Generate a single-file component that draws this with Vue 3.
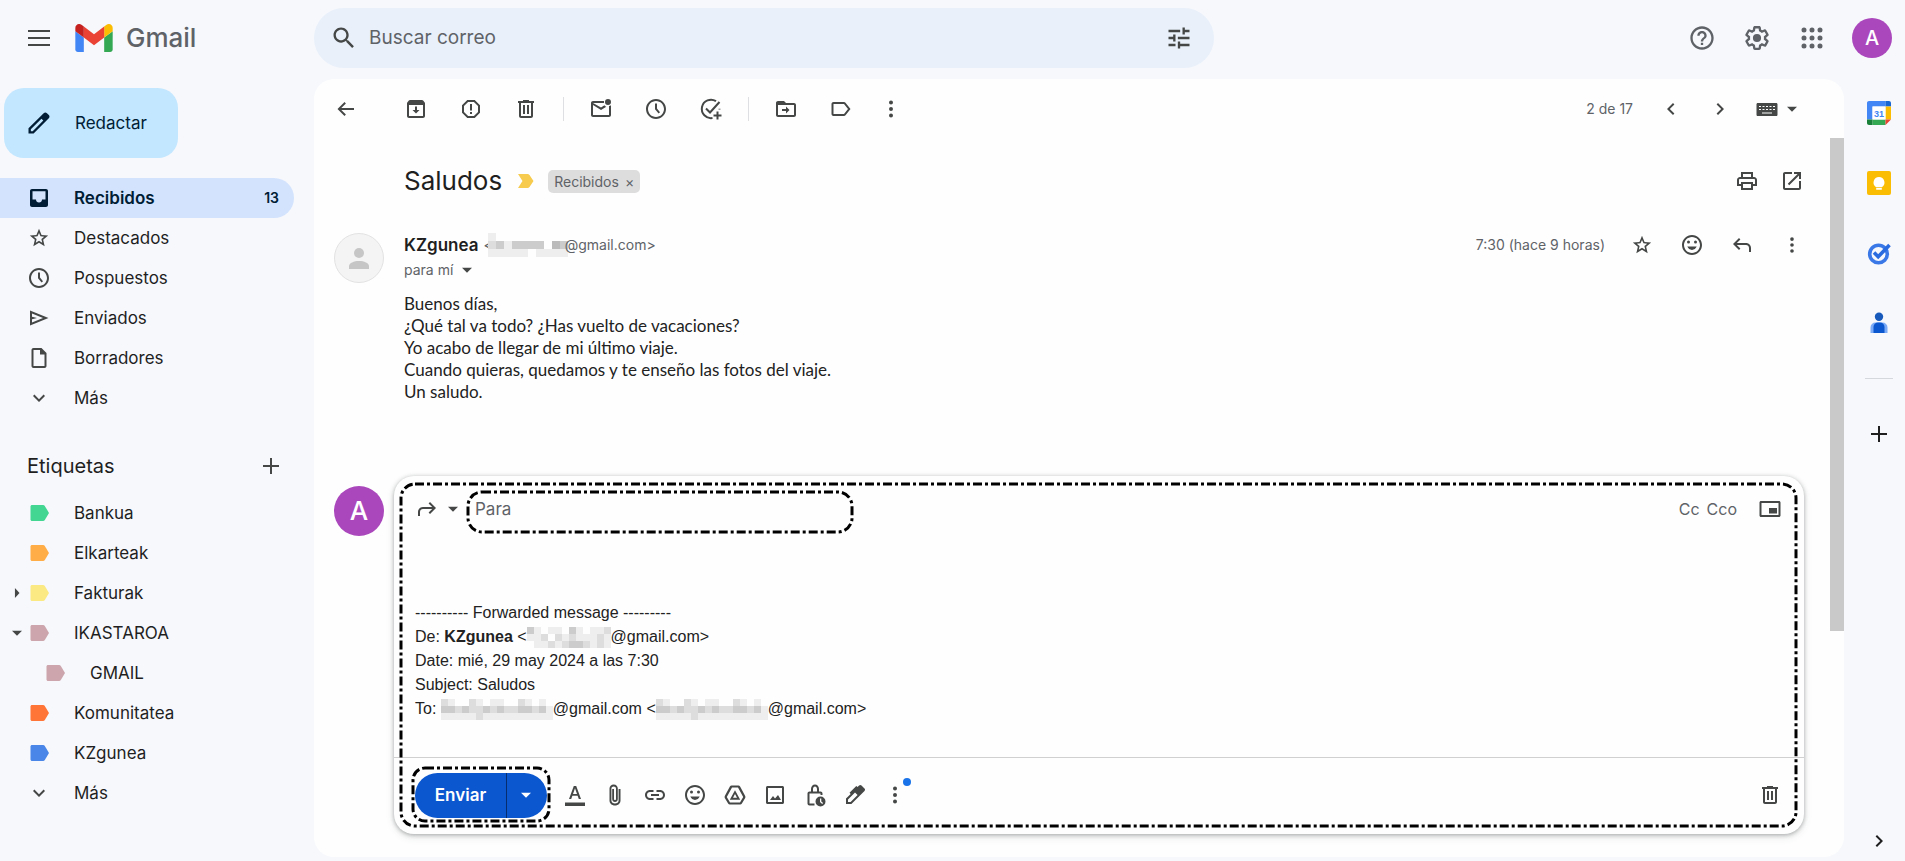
<script setup>
import { h, ref } from 'vue'

const paths = {
  menu: 'M1 4h22v2H1zM1 11h22v2H1zM1 18h22v2H1z',
  search: 'M15.5 14h-.79l-.28-.27C15.41 12.59 16 11.11 16 9.5 16 5.91 13.09 3 9.5 3S3 5.91 3 9.5 5.91 16 9.5 16c1.61 0 3.09-.59 4.23-1.57l.27.28v.79l5 4.99L20.49 19l-4.99-5zm-6 0C7.01 14 5 11.99 5 9.5S7.01 5 9.5 5 14 7.01 14 9.5 11.99 14 9.5 14z',
  tune: 'M3 17v2h6v-2H3zM3 5v2h10V5H3zm10 16v-2h8v-2h-8v-2h-2v6h2zM7 9v2H3v2h4v2h2V9H7zm14 4v-2H11v2h10zm-6-4h2V7h4V5h-4V3h-2v6z',
  help: 'M11 18h2v-2h-2v2zm1-16C6.48 2 2 6.48 2 12s4.48 10 10 10 10-4.48 10-10S17.52 2 12 2zm0 18c-4.41 0-8-3.59-8-8s3.59-8 8-8 8 3.59 8 8-3.59 8-8 8zm0-14c-2.21 0-4 1.79-4 4h2c0-1.1.9-2 2-2s2 .9 2 2c0 2-3 1.75-3 5h2c0-2.25 3-2.5 3-5 0-2.21-1.79-4-4-4z',
  settings: 'M13.85 22.25h-3.7c-.74 0-1.36-.54-1.45-1.27l-.27-1.89c-.27-.14-.53-.29-.79-.46l-1.8.72c-.7.26-1.47-.03-1.81-.65L2.2 15.53c-.35-.66-.2-1.44.36-1.88l1.53-1.19c-.01-.15-.02-.3-.02-.46 0-.15.01-.31.02-.46l-1.52-1.19c-.59-.45-.74-1.26-.37-1.88l1.85-3.19c.34-.62 1.11-.9 1.79-.63l1.81.73c.26-.17.52-.32.78-.46l.27-1.91c.09-.7.71-1.25 1.44-1.25h3.7c.74 0 1.36.54 1.45 1.27l.27 1.89c.27.14.53.29.79.46l1.8-.72c.71-.26 1.48.03 1.82.65l1.84 3.18c.36.66.2 1.44-.36 1.88l-1.52 1.19c.01.15.02.3.02.46s-.01.31-.02.46l1.52 1.19c.56.45.72 1.23.37 1.86l-1.86 3.22c-.34.62-1.11.9-1.8.63l-1.8-.72c-.26.17-.52.32-.78.46l-.27 1.91c-.1.68-.72 1.22-1.46 1.22zm-3.23-2h2.76l.37-2.55.53-.22c.44-.18.88-.44 1.34-.78l.45-.34 2.38.96 1.38-2.4-2.03-1.58.07-.56c.03-.26.06-.51.06-.78s-.03-.53-.06-.78l-.07-.56 2.03-1.58-1.39-2.4-2.39.96-.45-.35c-.42-.32-.87-.58-1.33-.77l-.52-.22-.37-2.55h-2.76l-.37 2.55-.53.21c-.44.19-.88.44-1.34.79l-.45.33-2.38-.95-1.39 2.39 2.03 1.58-.07.56a7 7 0 0 0-.06.79c0 .26.02.53.06.78l.07.56-2.03 1.58 1.38 2.4 2.39-.96.45.35c.43.33.86.58 1.33.77l.53.22.38 2.55zM12 8.5a3.5 3.5 0 1 1 0 7 3.5 3.5 0 0 1 0-7z',
  apps: [4, 12, 20].flatMap(y => [4, 12, 20].map(x => `M${x - 2.5} ${y}a2.5 2.5 0 1 1 5 0a2.5 2.5 0 1 1-5 0z`)).join(''),
  pencil: 'M20.4 5.2 18.8 3.6c-.8-.8-2-.8-2.8 0L3 16.6V21h4.4l13-13c.8-.8.8-2 0-2.8zM6.600 19H5v-1.600l9.100-9.100 1.600 1.600z',
  inbox: 'M19 3H5c-1.1 0-2 .9-2 2v14c0 1.1.9 2 2 2h14c1.1 0 2-.9 2-2V5c0-1.1-.9-2-2-2zM5.5 5.200h13V13.500h-3.5c0 1.700-1.300 3-3 3s-3-1.300-3-3H5.500z',
  star: 'M22 9.24l-7.19-.62L12 2 9.190 8.630 2 9.240l5.460 4.730L5.820 21 12 17.270 18.180 21l-1.630-7.030L22 9.240zM12 15.100l-3.500 2.100 .9-4-3.100-2.600 4.100-.4L12 6.500l1.600 3.700 4.100.4-3.100 2.600.9 4L12 15.100z',
  clock: 'M12 2C6.480 2 2 6.480 2 12s4.480 10 10 10 10-4.480 10-10S17.520 2 12 2zm0 18c-4.400 0-8-3.600-8-8s3.600-8 8-8 8 3.600 8 8-3.600 8-8 8zM11 6.500h2v5l3 3.700-1.400 1.300L11 12.300z',
  send: 'M3 4.500v15L21.500 12 3 4.500zm2 3L16 12 5 16.500v-3.200l5-1.300-5-1.300z',
  draft: 'M14.500 2H6.500C5.400 2 4.500 2.900 4.500 4v16c0 1.100.9 2 2 2h11c1.100 0 2-.9 2-2V7l-5-5zM6.500 20V4H13v4.500h4.500V20z',
  expand: 'M7.400 8.600 12 13.200l4.600-4.600L18 10l-6 6-6-6z',
  plus: 'M20 13h-7v7h-2v-7H4v-2h7V4h2v7h7z',
  back: 'M20 11H7.300l4.600-4.600L10.500 5l-7 7 7 7 1.400-1.400L7.300 13H20z',
  archive: 'M20.540 5.230l-1.390-1.680C18.880 3.210 18.470 3 18 3H6c-.47 0-.88.21-1.160.55L3.460 5.230C3.170 5.570 3 6.020 3 6.500V19c0 1.100.9 2 2 2h14c1.100 0 2-.9 2-2V6.500c0-.48-.17-.93-.46-1.270zM5 19V8h14v11H5zM11 9.500h2V13h2.500L12 16.500 8.500 13H11z',
  report: 'M15.730 3H8.270L3 8.270v7.460L8.270 21h7.460L21 15.730V8.270L15.730 3zM19 14.900L14.900 19H9.100L5 14.900V9.100L9.100 5h5.800L19 9.100v5.800zM11 7h2v6.500h-2zM11 15h2v2h-2z',
  trash: 'M15 4V3H9v1H4v2h1v13c0 1.100.9 2 2 2h10c1.100 0 2-.9 2-2V6h1V4zM17 19H7V6h10zM9 8h2v9H9zM13 8h2v9h-2z',
  unread: 'M20 8.900V18H4V8l8 5 5.300-3.300C16.500 9.400 15.900 8.900 15.500 8.200L12 10.500 4 6h11V4H4c-1.100 0-2 .9-2 2v12c0 1.100.9 2 2 2h16c1.100 0 2-.9 2-2V8.200c-.6.400-1.200.6-2 .7zM19 2a3 3 0 1 1 0 6 3 3 0 0 1 0-6z',
  move: 'M20 6h-8l-2-2H4c-1.100 0-2 .9-2 2v12c0 1.100.9 2 2 2h16c1.100 0 2-.9 2-2V8c0-1.100-.9-2-2-2zm0 12H4V8h16zM12 9.500 15.500 13 12 16.500V14H8v-2h4z',
  label: 'M16.500 5.800C16.100 5.300 15.600 5 15 5H4.500C3.400 5 2.500 5.900 2.500 7v10c0 1.100.9 2 2 2H15c.6 0 1.100-.3 1.500-.8L21.500 12zM15 17H4.500V7H15l4 5z',
  more: 'M12 3.500a2 2 0 1 1 0 4 2 2 0 0 1 0-4zM12 10a2 2 0 1 1 0 4 2 2 0 0 1 0-4zM12 16.500a2 2 0 1 1 0 4 2 2 0 0 1 0-4z',
  prev: 'M15.400 7.400 14 6l-6 6 6 6 1.400-1.400L10.800 12z',
  next: 'M8.600 16.600 13.200 12 8.600 7.400 10 6l6 6-6 6z',
  caret: 'M6 9.200h12L12 15.400z',
  right: 'M9.500 6v12l5.500-6z',
  keyboard: 'M21 6H3c-1.100 0-1.500.5-1.500 1.500v10c0 1 .4 1.500 1.500 1.500h18c1.100 0 1.500-.5 1.500-1.500v-10c0-1-.4-1.500-1.500-1.500zM4 9h2v1H4zM7.500 9h2v1h-2zM11 9h2v1h-2zM14.500 9h2v1h-2zM18 9h2v1h-2zM4 12h2v1H4zM7.500 12h2v1h-2zM11 12h2v1h-2zM14.500 12h2v1h-2zM18 12h2v1h-2zM7 15.500h10v1H7z',
  print: 'M19 8h-1V3H6v5H5c-1.660 0-3 1.340-3 3v6h4v4h12v-4h4v-6c0-1.660-1.340-3-3-3zM8 5h8v3H8V5zm8 14H8v-4h8v4zm4-4h-2v-2H6v2H4v-4c0-.55.45-1 1-1h14c.55 0 1 .45 1 1z',
  open: 'M19 19H5V5h7V3H5c-1.100 0-2 .9-2 2v14c0 1.100.9 2 2 2h14c1.100 0 2-.9 2-2v-7h-2zM14 3v2h3.600L7.800 14.800l1.400 1.400L19 6.400V10h2V3z',
  emoji: 'M12 2C6.500 2 2 6.500 2 12s4.500 10 10 10 10-4.500 10-10S17.500 2 12 2zm0 18c-4.400 0-8-3.600-8-8s3.600-8 8-8 8 3.600 8 8-3.600 8-8 8zM8.500 7.500a1.500 1.500 0 1 1 0 3 1.500 1.500 0 0 1 0-3zM15.500 7.500a1.500 1.500 0 1 1 0 3 1.500 1.500 0 0 1 0-3zM7.300 13.600h9.400c-.8 2-2.600 3.300-4.700 3.300s-3.900-1.300-4.700-3.300z',
  reply: 'M9 5 3 11l6 6 1.400-1.400L6.800 12H16c1.700 0 3 1.300 3 3v4h2v-4c0-2.800-2.200-5-5-5H6.800l3.600-3.600z',
  forward: 'M15 5l6 6-6 6-1.400-1.400 3.600-3.600H8c-1.700 0-3 1.300-3 3v4H3v-4c0-2.800 2.200-5 5-5h9.200l-3.600-3.600z',
  popout: 'M21 4H3c-.8 0-1.500.7-1.500 1.500v13c0 .8.700 1.500 1.500 1.500h18c.8 0 1.500-.7 1.500-1.500v-13c0-.8-.7-1.500-1.500-1.500zM20.500 18h-17V6h17zM11 11h8v5.500h-8z',
  format: 'M2 19.500h20V23H2zM10.800 3h2.400L18 16h-2.200l-1.200-3.300H9.400L8.200 16H6zM10 10.900h4L12 5.200z',
  attach: 'M17.500 6v11.500c0 2.800-2.200 5-5.500 5s-5.500-2.200-5.500-5V5.500C6.500 3.300 8.200 1.500 10.700 1.500s4.100 1.800 4.100 4V16c0 1.700-1.200 3-2.800 3s-2.800-1.300-2.800-3V6H11v10c0 .6.400 1 1 1s1-.4 1-1V5.500c0-1.100-1-2-2.300-2s-2.300.9-2.300 2v12c0 1.700 1.600 3 3.600 3s3.600-1.300 3.600-3V6z',
  link: 'M10.500 7H7c-2.800 0-5 2.200-5 5s2.200 5 5 5h3.500v-2H7c-1.700 0-3-1.300-3-3s1.300-3 3-3h3.500zM13.500 7v2H17c1.700 0 3 1.300 3 3s-1.300 3-3 3h-3.500v2H17c2.800 0 5-2.200 5-5s-2.200-5-5-5zM8 11h8v2H8z',
  drive: 'M15.400 2.500H8.600c-.7 0-1.300.4-1.700 1L1.800 13c-.3.600-.3 1.300 0 1.900l3.300 5.600c.4.600 1 1 1.700 1h10.400c.7 0 1.300-.4 1.700-1l3.300-5.600c.3-.6.3-1.300 0-1.900L17.100 3.500c-.4-.6-1-1-1.700-1zM17 19.500H7L3.800 14 9 4.500h6l5.200 9.500zM12 7.200l-5.200 9.600h10.400zm0 3.900 2 3.700h-4z',
  image: 'M19.500 3h-15C3.700 3 3 3.700 3 4.500v15c0 .8.700 1.500 1.500 1.500h15c.8 0 1.500-.7 1.500-1.500v-15c0-.8-.7-1.500-1.500-1.500zM19 19H5V5h14zM7 17l3-4 2 2.500 3-3.500 3 5z',
  lock: 'M17.500 8.500H16V6c0-2.500-1.800-4.500-4-4.500S8 3.500 8 6v2.500H6.500c-1.100 0-2 .9-2 2v10c0 1.100.9 2 2 2h5v-2h-5v-10h11V12h2v-1.500c0-1.100-.9-2-2-2zM10 8.500V6c0-1.400.9-2.500 2-2.500s2 1.100 2 2.500v2.500zM17.500 13.500a5 5 0 1 1 0 10 5 5 0 0 1 0-10zM17 15.500v3.400l2.200 2 .9-.9-1.800-1.600v-2.900z',
  pen: 'M21.500 5.500 18.500 2.500c-.7-.7-1.700-.7-2.400 0L14.500 4l-1.200-1.100L6.500 9.700l1.200 1.200L3 15.600V21h5.400L21.500 7.900c.7-.7.7-1.700 0-2.400zM7.600 19H5v-2.600l7-7 2.600 2.600z',
}
const Icon = (props) => h('svg', { class: 'icon', viewBox: '0 0 24 24', 'aria-hidden': 'true' }, [
  h('path', { d: paths[props.name], 'fill-rule': 'evenodd' }),
])
Icon.props = ['name']

const folders = [
  { name: 'Recibidos', icon: 'inbox', count: 13, active: true },
  { name: 'Destacados', icon: 'star' },
  { name: 'Pospuestos', icon: 'clock' },
  { name: 'Enviados', icon: 'send' },
  { name: 'Borradores', icon: 'draft' },
  { name: 'Más', icon: 'expand' },
]
const labels = [
  { name: 'Bankua', color: '#42d692' },
  { name: 'Elkarteak', color: '#ffad47' },
  { name: 'Fakturak', color: '#fbe983', arrow: 'right' },
  { name: 'IKASTAROA', color: '#cca6ac', arrow: 'caret' },
  { name: 'GMAIL', color: '#cca6ac', nested: true },
  { name: 'Komunitatea', color: '#ff7537' },
  { name: 'KZgunea', color: '#4986e7' },
]
const toolbar = [
  [['archive', 'Archivar'], ['report', 'Marcar como spam'], ['trash', 'Eliminar']],
  [['unread', 'Marcar como no leído'], ['clock', 'Posponer'], ['task', 'Añadir a Tasks']],
  [['move', 'Mover a'], ['label', 'Etiquetas'], ['more', 'Más']],
]
const composeTools = [
  ['format', 'Opciones de formato'], ['attach', 'Adjuntar archivos'], ['link', 'Insertar enlace'],
  ['emoji', 'Insertar emoji'], ['drive', 'Insertar desde Drive'], ['image', 'Insertar foto'],
  ['lock', 'Modo confidencial'], ['pen', 'Insertar firma'], ['more', 'Más opciones'],
]
const body = [
  'Buenos días,',
  '¿Qué tal va todo? ¿Has vuelto de vacaciones?',
  'Yo acabo de llegar de mi último viaje.',
  'Cuando quieras, quedamos y te enseño las fotos del viaje.',
  'Un saludo.',
]

// Redacted addresses: rows of grey levels, one hex digit per cell (f = blank).
const sender = ['efffffffff', 'dceccccfbc', 'eeeeefeeee']
const fromMask = ['cefeefcefeed', 'eedfdedeeede', 'feededccdede']
const toMask = ['deffdefeeffdefef', 'ccdcddcdcddccdce', 'eeeeedeeeeeeeeee']
const Mosaic = (props) => h('svg', {
  class: 'mosaic',
  width: props.rows[0].length * props.cell,
  height: props.rows.length * props.cell,
  'aria-label': 'dirección oculta',
  role: 'img',
}, props.rows.flatMap((row, y) => [...row].map((c, x) => c === 'f' ? null : h('rect', {
  x: x * props.cell, y: y * props.cell, width: props.cell, height: props.cell, fill: `#${c}${c}${c}`,
}))))
Mosaic.props = ['rows', 'cell']

const query = ref('')
const to = ref('')
</script>

<template>
  <div class="app">
    <header class="top">
      <div class="brand">
        <button class="btn" aria-label="Menú principal"><Icon name="menu" /></button>
        <a href="#" class="logo" aria-label="Gmail">
          <svg width="38" height="28" viewBox="52 42 88 66" aria-hidden="true">
            <path fill="#4285f4" d="M58 108h14V74L52 59v43c0 3.320 2.690 6 6 6" />
            <path fill="#34a853" d="M120 108h14c3.320 0 6-2.690 6-6V59l-20 15" />
            <path fill="#fbbc04" d="M120 48v26l20-15v-8c0-7.420-8.470-11.650-14.400-7.200" />
            <path fill="#ea4335" d="M72 74V48l24 18 24-18v26L96 92" />
            <path fill="#c5221f" d="M52 51v8l20 15V48l-5.600-4.200c-5.940-4.450-14.400-.22-14.400 7.200" />
          </svg>
          <span>Gmail</span>
        </a>
      </div>
      <div class="top-main">
        <form class="search" @submit.prevent>
          <button class="btn" aria-label="Buscar"><Icon name="search" /></button>
          <input v-model="query" type="text" placeholder="Buscar correo" aria-label="Buscar correo">
          <button class="btn" type="button" aria-label="Opciones de búsqueda"><Icon name="tune" /></button>
        </form>
        <div class="account">
          <button class="btn" aria-label="Ayuda"><Icon name="help" /></button>
          <button class="btn" aria-label="Configuración"><Icon name="settings" /></button>
          <button class="btn apps" aria-label="Aplicaciones"><Icon name="apps" /></button>
          <button class="avatar small" aria-label="Cuenta">A</button>
        </div>
      </div>
    </header>

    <div class="columns">
      <aside class="side">
        <button class="compose-btn"><Icon name="pencil" />Redactar</button>
        <nav class="nav" aria-label="Carpetas">
          <a v-for="f in folders" :key="f.name" href="#" class="row" :class="{ active: f.active }">
            <Icon :name="f.icon" :class="'i-' + f.icon" /><span class="name">{{ f.name }}</span><span v-if="f.count" class="count">{{ f.count }}</span>
          </a>
        </nav>
        <div class="labels-head">
          <h2>Etiquetas</h2>
          <button class="btn" aria-label="Crear etiqueta"><Icon name="plus" /></button>
        </div>
        <nav class="nav" aria-label="Etiquetas">
          <a v-for="l in labels" :key="l.name" href="#" class="row label-row" :class="{ nested: l.nested }">
            <Icon v-if="l.arrow" :name="l.arrow" class="tree" />
            <svg class="tag" width="20" height="16" viewBox="0 0 20 16" aria-hidden="true">
              <path :fill="l.color" d="M2 0h11c.8 0 1.400.3 1.800.9L19 8l-4.200 7.100c-.4.600-1 .9-1.800.9H2c-.8 0-1.500-.7-1.500-1.500v-13C.5.700 1.200 0 2 0z" />
            </svg>
            <span class="name">{{ l.name }}</span>
          </a>
          <a href="#" class="row"><Icon name="expand" /><span class="name">Más</span></a>
        </nav>
      </aside>

      <main class="panel">
        <div class="toolbar">
          <button class="btn back" aria-label="Volver"><Icon name="back" /></button>
          <template v-for="(group, i) in toolbar" :key="i">
            <span v-if="i" class="sep"></span>
            <button v-for="[icon, title] in group" :key="icon" class="btn" :class="'b-' + icon" :aria-label="title">
              <svg v-if="icon === 'task'" class="icon" viewBox="0 0 24 24" aria-hidden="true">
                <path class="line" d="M20.500 12.500v-.8M17 4.200A9.200 9.200 0 1 0 13.500 21M7 11.500l4 4L20.500 5M18.500 14.500v8M14.500 18.500h8" />
              </svg>
              <Icon v-else :name="icon" />
            </button>
          </template>
          <span class="position">2 de 17</span>
          <button class="btn" aria-label="Más reciente"><Icon name="prev" /></button>
          <button class="btn next" aria-label="Más antiguo"><Icon name="next" /></button>
          <button class="btn input-tool" aria-label="Herramientas de introducción"><Icon name="keyboard" /><Icon name="caret" class="caret" /></button>
        </div>

        <div class="scroll">
          <div class="content">
            <div class="subject">
              <h1>Saludos</h1>
              <svg class="important" width="16" height="14" viewBox="0 0 16 14" aria-label="Importante" role="img">
                <path d="M0 0h9.500c.8 0 1.500.4 2 1l4 6-4 6c-.5.600-1.200 1-2 1H0l4.500-7z" />
              </svg>
              <span class="chip">Recibidos <button aria-label="Quitar etiqueta">×</button></span>
              <span class="subject-actions">
                <button class="btn" aria-label="Imprimir"><Icon name="print" /></button>
                <button class="btn" aria-label="Abrir en una ventana nueva"><Icon name="open" /></button>
              </span>
            </div>

            <article class="message">
              <svg class="person" width="50" height="50" viewBox="0 0 50 50" aria-hidden="true">
                <circle cx="25" cy="25" r="24.500" fill="#f4f4f4" stroke="#e2e2e2" />
                <circle cx="25" cy="20" r="5" fill="#c6c6c6" />
                <path d="M15 36v-3c0-3 5-5 10-5s10 2 10 5v3z" fill="#c6c6c6" />
              </svg>
              <div class="message-main">
                <div class="from">
                  <strong>KZgunea</strong>
                  <span class="address">&lt;<Mosaic :rows="sender" :cell="8" />@gmail.com&gt;</span>
                  <time>7:30 (hace 9 horas)</time>
                  <span class="from-actions">
                    <button class="btn" aria-label="Destacar"><Icon name="star" class="i-star" /></button>
                    <button class="btn" aria-label="Reaccionar"><Icon name="emoji" /></button>
                    <button class="btn" aria-label="Responder"><Icon name="reply" /></button>
                    <button class="btn" aria-label="Más"><Icon name="more" class="i-more" /></button>
                  </span>
                </div>
                <button class="recipient">para mí <Icon name="caret" class="caret" /></button>
                <div class="body"><p v-for="line in body" :key="line">{{ line }}</p></div>
              </div>
            </article>

            <section class="reply" aria-label="Reenviar">
              <span class="avatar">A</span>
              <div class="card">
                <div class="card-head">
                  <button class="type" aria-label="Tipo de respuesta"><Icon name="forward" /><Icon name="caret" class="caret" /></button>
                  <div class="to">
                    <label for="to">Para</label>
                    <input id="to" v-model="to" type="text">
                    <svg class="dash"><rect width="100%" height="100%" rx="14" /></svg>
                  </div>
                  <span class="copies"><button>Cc</button><button>Cco</button></span>
                  <button class="btn" aria-label="Abrir en ventana"><Icon name="popout" /></button>
                </div>
                <div class="quoted" contenteditable="true" role="textbox" aria-label="Cuerpo del mensaje">
                  <p>---------- Forwarded message ---------</p>
                  <p>De: <strong>KZgunea</strong>{{ ' <' }}<Mosaic :rows="fromMask" :cell="7" />@gmail.com&gt;</p>
                  <p>Date: mié, 29 may 2024 a las 7:30</p>
                  <p>Subject: Saludos</p>
                  <p>{{ 'To: ' }}<Mosaic :rows="toMask" :cell="7" />@gmail.com &lt;<Mosaic :rows="toMask" :cell="7" />@gmail.com&gt;</p>
                </div>
                <div class="card-foot">
                  <div class="send">
                    <button class="send-main">Enviar</button>
                    <button class="send-more" aria-label="Más opciones de envío"><Icon name="caret" class="caret" /></button>
                    <svg class="dash"><rect width="100%" height="100%" rx="12" /></svg>
                  </div>
                  <button v-for="[icon, title] in composeTools" :key="icon" class="btn" :class="'c-' + icon" :aria-label="title"><Icon :name="icon" /></button>
                  <button class="btn discard" aria-label="Descartar"><Icon name="trash" /></button>
                </div>
                <svg class="dash frame"><rect width="100%" height="100%" rx="14" /></svg>
              </div>
            </section>
          </div>
          <div class="track"><div class="thumb"></div></div>
        </div>
      </main>

      <aside class="rail" aria-label="Panel lateral">
        <button aria-label="Calendar">
          <svg width="24" height="24" viewBox="0 0 24 24">
            <path fill="#4285f4" d="M2 0h16.500v5.500H5.500v13H0V2C0 .9.9 0 2 0z" />
            <path fill="#1967d2" d="M18.500 0H22c1.100 0 2 .9 2 2v3.500h-5.500z" />
            <path fill="#fbbc04" d="M18.500 5.500H24v13h-5.500z" />
            <path fill="#34a853" d="M5.500 18.500h13V24h-13z" />
            <path fill="#188038" d="M0 18.500h5.500V24H2c-1.100 0-2-.9-2-2z" />
            <path fill="#ea4335" d="M18.500 18.500H24L18.500 24z" />
            <path fill="#fff" d="M5.500 5.500h13v13h-13z" />
            <text x="12" y="16" text-anchor="middle">31</text>
          </svg>
        </button>
        <button aria-label="Keep">
          <svg width="24" height="24" viewBox="0 0 24 24">
            <rect width="24" height="24" rx="2" fill="#fbbc04" />
            <path fill="#fff" d="M12 6a5.500 5.500 0 0 1 2.800 10.200H9.200A5.500 5.500 0 0 1 12 6zM9.200 17h5.600v1.800H9.200z" />
          </svg>
        </button>
        <button aria-label="Tasks">
          <svg width="24" height="24" viewBox="0 0 24 24">
            <circle cx="11.500" cy="13" r="8.800" fill="none" stroke="#3b78e7" stroke-width="3.600" />
            <path fill="none" stroke="#2a6be0" stroke-width="3.600" d="m7 11.500 4.200 4.200L22.500 4" />
          </svg>
        </button>
        <button aria-label="Contactos">
          <svg width="24" height="24" viewBox="0 0 24 24">
            <circle cx="12" cy="5.800" r="4.200" fill="#185abc" />
            <path fill="#7baaf7" d="M3.500 22v-5.500a5 5 0 0 1 5-5h7a5 5 0 0 1 5 5V22z" />
            <path fill="#0b57d0" d="M6.500 22v-6a4.500 4.500 0 0 1 4.500-4.500h2a4.500 4.500 0 0 1 4.500 4.500v6z" />
          </svg>
        </button>
        <hr>
        <button class="add" aria-label="Descargar complementos"><Icon name="plus" /></button>
        <button class="collapse" aria-label="Ocultar panel lateral"><Icon name="next" /></button>
      </aside>
    </div>
  </div>
</template>

<style>
body { margin: 0; background: #f6f8fc; }
</style>

<style scoped>
.app { min-height: 100vh; display: flex; flex-direction: column; background: #f6f8fc; color: #1f1f1f; font: 17px/24px Inter, Roboto, sans-serif; }
button { border: 0; padding: 0; background: none; font: inherit; color: inherit; cursor: pointer; }
input { border: 0; outline: 0; padding: 0; background: none; font: inherit; color: inherit; min-width: 0; }
a { color: inherit; text-decoration: none; }
h1, h2, p { margin: 0; font-weight: 400; }
.icon { width: 24px; height: 24px; flex: none; fill: #444746; display: block; }
.caret { width: 20px; height: 20px; }
.btn { width: 40px; height: 40px; flex: none; display: flex; align-items: center; justify-content: center; }
.avatar { width: 50px; height: 50px; flex: none; border-radius: 50%; background: #ab47bc; color: #fff; font-size: 26px; font-weight: 500; display: flex; align-items: center; justify-content: center; }
.avatar.small { width: 40px; height: 40px; font-size: 20px; }
.line { fill: none; stroke: #444746; stroke-width: 2; }

.top { display: flex; height: 79px; box-sizing: border-box; padding: 8px 13px 11px 0; }
.brand { width: 314px; flex: none; display: flex; align-items: center; gap: 16px; padding-left: 19px; box-sizing: border-box; }
.logo { display: flex; align-items: center; gap: 13px; font-size: 26px; font-weight: 500; color: #5f6368; }
.top-main { flex: 1; display: flex; justify-content: space-between; align-items: center; }
.search { flex: 0 1 900px; height: 60px; box-sizing: border-box; border-radius: 30px; background: #e9f0fa; padding: 0 15px 0 10px; display: flex; align-items: center; gap: 5px; }
.search input { flex: 1; font-size: 19px; color: #5f6368; }
.search input::placeholder { color: #5f6368; opacity: 1; }
.search .icon { width: 28px; height: 28px; }
.account { display: flex; align-items: center; gap: 15px; }
.account .icon { width: 28px; height: 28px; }
.account .btn .icon { fill: #5f6368; }
.account .apps .icon { width: 24px; height: 24px; }
.account .avatar.small { margin-left: 5px; }

.columns { flex: 1; display: flex; }
.side { width: 314px; flex: none; padding-top: 9px; box-sizing: border-box; }
.compose-btn { margin: 0 0 20px 4px; height: 70px; padding: 0 31px 0 21px; border-radius: 20px; background: #c2e7ff; color: #001d35; display: flex; align-items: center; gap: 22px; }
.compose-btn .icon { width: 28px; height: 28px; fill: #001d35; }
.nav { display: flex; flex-direction: column; margin-right: 20px; }
.row { height: 40px; padding: 0 15px 0 27px; display: flex; align-items: center; gap: 23px; position: relative; }
.row .name { flex: 1; }
.row.active { background: #d3e3fd; border-radius: 0 20px 20px 0; font-weight: 600; color: #001d35; }
.row .count { font-size: 14px; }
.row.active .icon { fill: #001d35; }
.tag { margin: 0 -1px 0 3px; padding-right: 2px; }
.label-row.nested { padding-left: 43px; }
.tree { position: absolute; left: 7px; width: 20px; height: 20px; }
.labels-head { height: 40px; margin: 28px 23px 7px 27px; display: flex; align-items: center; justify-content: space-between; }
.labels-head h2 { font-size: 20px; }

.panel { flex: 1; min-width: 0; margin-bottom: 4px; border-radius: 20px; background: #fefefe; display: flex; flex-direction: column; overflow: hidden; }
.toolbar { height: 59px; padding: 0 42px 0 12px; display: flex; align-items: center; gap: 15px; }
.toolbar .back { margin-right: 15px; }
.toolbar .b-more { width: 30px; }
.sep { width: 1px; height: 24px; margin: 0 2px; background: #dddfe2; }
.position { margin-left: auto; font-size: 14px; color: #5f6368; margin-right: 3px; }
.toolbar .next { margin-left: -6px; }
.input-tool { width: auto; gap: 3px; }

.scroll { flex: 1; display: flex; }
.content { flex: 1; min-width: 0; padding: 21px 0 23px 20px; }
.track { width: 14px; flex: none; }
.thumb { height: 493px; background: #c9c9c9; }
.subject { display: flex; align-items: center; height: 44px; padding: 0 18px 0 70px; }
.subject h1 { font-size: 26px; line-height: 36px; }
.important { fill: #f7cb4d; margin: 0 14px 0 16px; }
.chip { background: #ddd; color: #5f6368; border-radius: 5px; font-size: 14px; line-height: 23px; padding: 0 6px; display: flex; gap: 6px; }
.subject-actions { margin-left: auto; display: flex; gap: 5px; }
.message { display: flex; gap: 20px; padding: 30px 18px 0 0; }
.message-main { flex: 1; min-width: 0; }
.from { height: 24px; display: flex; align-items: center; gap: 5px; }
.from strong { font-weight: 600; }
.address { font-size: 14px; color: #5f6368; display: flex; align-items: center; }
.address .mosaic { margin: 0 -3px 0 -5px; }
.from time { margin-left: auto; font-size: 14px; color: #5f6368; }
.from-actions { display: flex; gap: 10px; margin-left: 12px; }
.i-star { width: 22px; height: 22px; }
.row .i-star { margin: 0 1px; }
.i-more { width: 22px; height: 22px; }
.mosaic { display: block; flex: none; }
.recipient { height: 26px; display: flex; align-items: center; gap: 4px; font-size: 14px; color: #5f6368; }
.body { margin-top: 10px; font: 17px/22px Lato, "Open Sans", sans-serif; color: #222; }

.reply { display: flex; gap: 10px; margin-top: 73px; padding-right: 26px; }
.reply .avatar { margin-top: 10px; }
.card { flex: 1; min-width: 0; position: relative; border-radius: 20px; background: #fefefe; box-shadow: 0 1px 4px rgba(60, 64, 67, .4), 0 3px 8px rgba(60, 64, 67, .12); }
.card-head { height: 34px; padding: 16px 14px 6px 21px; display: flex; align-items: center; color: #5f6368; }
.type { display: flex; align-items: center; gap: 4px; width: 53px; }
.to { position: relative; flex: 0 1 384px; display: flex; align-items: center; gap: 8px; height: 34px; padding: 0 12px 0 7px; box-sizing: border-box; }
.to input { flex: 1; }
.dash { position: absolute; overflow: visible; pointer-events: none; }
.dash rect { fill: none; stroke: #000; stroke-width: 3; stroke-dasharray: 9 3 3 3; }
.to .dash { inset: 0 0 -6px 0; width: 100%; height: 40px; }
.frame { inset: 8px 8px 8px 7px; width: calc(100% - 15px); height: calc(100% - 16px); }
.copies { margin-left: auto; margin-right: 13px; display: flex; gap: 7px; font-size: 16px; }
.quoted { padding: 69px 21px 36px; font: 16px/24px "Liberation Sans", Arial, sans-serif; color: #222; outline: 0; }
.quoted p { height: 24px; display: flex; align-items: center; white-space: pre; }
.card-foot { border-top: 1px solid #d0d0d0; height: 77px; box-sizing: border-box; padding: 0 14px 2px 21px; display: flex; align-items: center; }
.send { position: relative; height: 45px; display: flex; border-radius: 23px; background: #0b57d0; color: #fff; margin-right: 8px; }
.send-main { width: 91px; font-weight: 600; border-right: 1px solid #062e6f; box-sizing: content-box; }
.send-more { width: 40px; display: flex; align-items: center; justify-content: center; padding-right: 3px; box-sizing: border-box; }
.send .icon { fill: #fff; }
.send .dash { inset: -5px -2px -3px -2px; width: calc(100% + 4px); height: calc(100% + 8px); }
.c-more { position: relative; }
.c-more::after { content: ""; position: absolute; right: 4px; top: 3px; width: 8px; height: 8px; border-radius: 50%; background: #1a73e8; }
.discard { margin-left: auto; }

.rail { width: 61px; flex: none; display: flex; flex-direction: column; align-items: center; gap: 30px; padding: 14px 0 0 9px; box-sizing: border-box; }
.rail button { width: 40px; height: 40px; display: flex; align-items: center; justify-content: center; }
.rail text { font: 700 9px "Liberation Sans", sans-serif; fill: #4285f4; }
.rail hr { width: 28px; margin: 5px 0; border: 0; border-top: 1px solid #d5d8dc; }
.rail .icon { fill: #1f1f1f; }
.rail .collapse { margin-top: auto; }
</style>
